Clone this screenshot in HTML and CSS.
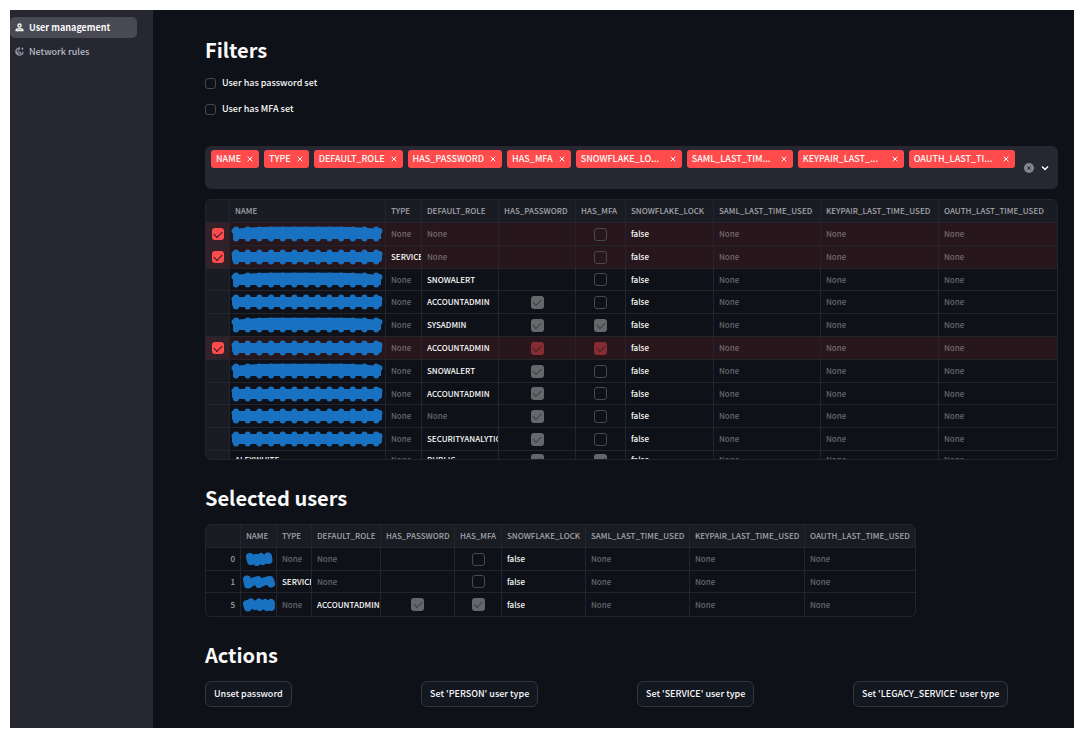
FILE: index.html
```html
<!DOCTYPE html>
<html lang="en">
<head>
<meta charset="utf-8">
<title>User management</title>
<link rel="stylesheet" href="styles.css">
</head>
<body>
<svg class="defs" aria-hidden="true">
  <symbol id="mask-full" viewBox="0 0 151 16" preserveAspectRatio="none">
    <rect x="1" y="3" width="149" height="10" rx="3"/>
    <path class="dots" d="M5 3.5H147M5 12.5H147M3.5 5V11M147.5 5V11"/>
  </symbol>
  <symbol id="mask-flat" viewBox="0 0 151 16" preserveAspectRatio="none">
    <path d="M2 3Q20 1 40 .8H110Q130 1 149 3V13H2z"/>
    <path class="dots" d="M5 3.5H147M5 12.5H147M3.5 5V11M147.5 5V11"/>
  </symbol>
  <symbol id="x" viewBox="0 0 8 8"><path class="line" d="M1.7 1.7L6.3 6.3M6.3 1.7L1.7 6.3"/></symbol>
</svg>
<div class="app">
  <nav class="sidebar">
    <a class="nav-item active" href="#users">
      <svg class="nav-icon" viewBox="0 0 8 8"><circle class="line" cx="4" cy="2.3" r="1.4"/><path class="line" d="M1 6.8V6.2C1.2 4.8 6.8 4.8 7 6.2V6.8z"/></svg>
      <span>User management</span>
    </a>
    <a class="nav-item" href="#network">
      <svg class="nav-icon dim" viewBox="0 0 8 8"><path class="line" d="M4.4.9A3.2 3.2 0 1 0 7.2 4.3"/><path d="M.9 3L3.2 5V7.3C1.5 6.8.6 5 .9 3zM4.3 1V2.5L3 3.2V4H5V5.2L6.2 6.2 5.2 7 3.6 5 2.4 3.5 2.8 2zM6.5 0L7 1.2 8 1.6 7 2 6.5 3.2 6 2 5 1.6 6 1.2z"/></svg>
      <span>Network rules</span>
    </a>
  </nav>
  <main class="main">
    <h2>Filters</h2>
    <div class="filters">
      <label class="filter"><input type="checkbox" class="box filter-box"><span>User has password set</span></label>
      <label class="filter"><input type="checkbox" class="box filter-box"><span>User has MFA set</span></label>
    </div>

    <div class="multiselect">
      <div class="tags">
        <span class="tag">NAME<button aria-label="Remove NAME"><svg><use href="#x"/></svg></button></span>
        <span class="tag">TYPE<button aria-label="Remove TYPE"><svg><use href="#x"/></svg></button></span>
        <span class="tag">DEFAULT_ROLE<button aria-label="Remove DEFAULT_ROLE"><svg><use href="#x"/></svg></button></span>
        <span class="tag">HAS_PASSWORD<button aria-label="Remove HAS_PASSWORD"><svg><use href="#x"/></svg></button></span>
        <span class="tag">HAS_MFA<button aria-label="Remove HAS_MFA"><svg><use href="#x"/></svg></button></span>
        <span class="tag long">SNOWFLAKE_LO...<button aria-label="Remove SNOWFLAKE_LOCK"><svg><use href="#x"/></svg></button></span>
        <span class="tag long">SAML_LAST_TIM...<button aria-label="Remove SAML_LAST_TIME_USED"><svg><use href="#x"/></svg></button></span>
        <span class="tag long">KEYPAIR_LAST_...<button aria-label="Remove KEYPAIR_LAST_TIME_USED"><svg><use href="#x"/></svg></button></span>
        <span class="tag long">OAUTH_LAST_TI...<button aria-label="Remove OAUTH_LAST_TIME_USED"><svg><use href="#x"/></svg></button></span>
      </div>
      <button class="tool" aria-label="Clear all"><svg viewBox="0 0 10 10"><circle class="clear-disc" cx="5" cy="5" r="5"/><path class="clear-x" d="M3.4 3.4L6.6 6.6M6.6 3.4L3.4 6.6"/></svg></button>
      <button class="tool" aria-label="Open"><svg viewBox="0 0 10 10"><path class="chevron" d="M2 3.5L5 6.5L8 3.5"/></svg></button>
    </div>

    <div class="grid-frame users">
      <table>
        <colgroup><col class="w24"><col class="w156"><col class="w36"><col class="w77"><col class="w77"><col class="w50"><col class="w88"><col class="w107"><col class="w118"><col></colgroup>
        <thead><tr><th></th><th>NAME</th><th>TYPE</th><th>DEFAULT_ROLE</th><th>HAS_PASSWORD</th><th>HAS_MFA</th><th>SNOWFLAKE_LOCK</th><th>SAML_LAST_TIME_USED</th><th>KEYPAIR_LAST_TIME_USED</th><th>OAUTH_LAST_TIME_USED</th></tr></thead>
        <tbody>
          <tr class="selected"><td class="pick"><input type="checkbox" class="box" aria-label="Select row" checked></td><td class="masked"><svg><use href="#mask-flat"/></svg></td><td class="none">None</td><td class="none">None</td><td></td><td class="bool"><input type="checkbox" class="box" aria-label="Has MFA" disabled></td><td>false</td><td class="none">None</td><td class="none">None</td><td class="none">None</td></tr>
          <tr class="selected"><td class="pick"><input type="checkbox" class="box" aria-label="Select row" checked></td><td class="masked"><svg><use href="#mask-full"/></svg></td><td>SERVICE</td><td class="none">None</td><td></td><td class="bool"><input type="checkbox" class="box" aria-label="Has MFA" disabled></td><td>false</td><td class="none">None</td><td class="none">None</td><td class="none">None</td></tr>
          <tr><td class="pick"></td><td class="masked"><svg><use href="#mask-flat"/></svg></td><td class="none">None</td><td>SNOWALERT</td><td></td><td class="bool"><input type="checkbox" class="box" aria-label="Has MFA" disabled></td><td>false</td><td class="none">None</td><td class="none">None</td><td class="none">None</td></tr>
          <tr><td class="pick"></td><td class="masked"><svg><use href="#mask-full"/></svg></td><td class="none">None</td><td>ACCOUNTADMIN</td><td class="bool"><input type="checkbox" class="box" aria-label="Has password" checked disabled></td><td class="bool"><input type="checkbox" class="box" aria-label="Has MFA" disabled></td><td>false</td><td class="none">None</td><td class="none">None</td><td class="none">None</td></tr>
          <tr><td class="pick"></td><td class="masked"><svg><use href="#mask-flat"/></svg></td><td class="none">None</td><td>SYSADMIN</td><td class="bool"><input type="checkbox" class="box" aria-label="Has password" checked disabled></td><td class="bool"><input type="checkbox" class="box" aria-label="Has MFA" checked disabled></td><td>false</td><td class="none">None</td><td class="none">None</td><td class="none">None</td></tr>
          <tr class="selected"><td class="pick"><input type="checkbox" class="box" aria-label="Select row" checked></td><td class="masked"><svg><use href="#mask-full"/></svg></td><td class="none">None</td><td>ACCOUNTADMIN</td><td class="bool"><input type="checkbox" class="box" aria-label="Has password" checked disabled></td><td class="bool"><input type="checkbox" class="box" aria-label="Has MFA" checked disabled></td><td>false</td><td class="none">None</td><td class="none">None</td><td class="none">None</td></tr>
          <tr><td class="pick"></td><td class="masked"><svg><use href="#mask-flat"/></svg></td><td class="none">None</td><td>SNOWALERT</td><td class="bool"><input type="checkbox" class="box" aria-label="Has password" checked disabled></td><td class="bool"><input type="checkbox" class="box" aria-label="Has MFA" disabled></td><td>false</td><td class="none">None</td><td class="none">None</td><td class="none">None</td></tr>
          <tr><td class="pick"></td><td class="masked"><svg><use href="#mask-full"/></svg></td><td class="none">None</td><td>ACCOUNTADMIN</td><td class="bool"><input type="checkbox" class="box" aria-label="Has password" checked disabled></td><td class="bool"><input type="checkbox" class="box" aria-label="Has MFA" disabled></td><td>false</td><td class="none">None</td><td class="none">None</td><td class="none">None</td></tr>
          <tr><td class="pick"></td><td class="masked"><svg><use href="#mask-full"/></svg></td><td class="none">None</td><td class="none">None</td><td class="bool"><input type="checkbox" class="box" aria-label="Has password" checked disabled></td><td class="bool"><input type="checkbox" class="box" aria-label="Has MFA" disabled></td><td>false</td><td class="none">None</td><td class="none">None</td><td class="none">None</td></tr>
          <tr><td class="pick"></td><td class="masked"><svg><use href="#mask-full"/></svg></td><td class="none">None</td><td>SECURITYANALYTICS</td><td class="bool"><input type="checkbox" class="box" aria-label="Has password" checked disabled></td><td class="bool"><input type="checkbox" class="box" aria-label="Has MFA" disabled></td><td>false</td><td class="none">None</td><td class="none">None</td><td class="none">None</td></tr>
          <tr><td class="pick"></td><td>ALEXWHITE</td><td class="none">None</td><td>PUBLIC</td><td class="bool"><input type="checkbox" class="box" aria-label="Has password" checked disabled></td><td class="bool"><input type="checkbox" class="box" aria-label="Has MFA" checked disabled></td><td>false</td><td class="none">None</td><td class="none">None</td><td class="none">None</td></tr>
        </tbody>
      </table>
    </div>

    <h2>Selected users</h2>
    <div class="grid-frame chosen">
      <table>
        <colgroup><col class="w35"><col class="w36"><col class="w35"><col class="w69"><col class="w74"><col class="w47"><col class="w84"><col class="w104"><col class="w115"><col class="w110"></colgroup>
        <thead><tr><th></th><th>NAME</th><th>TYPE</th><th>DEFAULT_ROLE</th><th>HAS_PASSWORD</th><th>HAS_MFA</th><th>SNOWFLAKE_LOCK</th><th>SAML_LAST_TIME_USED</th><th>KEYPAIR_LAST_TIME_USED</th><th>OAUTH_LAST_TIME_USED</th></tr></thead>
        <tbody>
          <tr><td class="index">0</td><td class="masked"><svg viewBox="0 0 35 16"><path class="blob" d="M9 6L10 10 15 7 16 11 20 6 22 10 27 5.5 27.5 9"/></svg></td><td class="none">None</td><td class="none">None</td><td></td><td class="bool"><input type="checkbox" class="box" aria-label="Has MFA" disabled></td><td>false</td><td class="none">None</td><td class="none">None</td><td class="none">None</td></tr>
          <tr><td class="index">1</td><td class="masked"><svg viewBox="0 0 35 16"><path class="blob" d="M6 5.5L7 10.5 12 7.5 17 6 18 10 23 7.5 29 6 30 9.5"/></svg></td><td>SERVICE</td><td class="none">None</td><td></td><td class="bool"><input type="checkbox" class="box" aria-label="Has MFA" disabled></td><td>false</td><td class="none">None</td><td class="none">None</td><td class="none">None</td></tr>
          <tr><td class="index">5</td><td class="masked"><svg viewBox="0 0 35 16"><path class="blob" d="M6 7L7 10.5 10 5.5 14 9 18 5.5 19 10 24 6 26 10 30 6V10"/></svg></td><td class="none">None</td><td>ACCOUNTADMIN</td><td class="bool"><input type="checkbox" class="box" aria-label="Has password" checked disabled></td><td class="bool"><input type="checkbox" class="box" aria-label="Has MFA" checked disabled></td><td>false</td><td class="none">None</td><td class="none">None</td><td class="none">None</td></tr>
        </tbody>
      </table>
    </div>

    <h2>Actions</h2>
    <div class="actions">
      <button class="action">Unset password</button>
      <button class="action">Set 'PERSON' user type</button>
      <button class="action">Set 'SERVICE' user type</button>
      <button class="action">Set 'LEGACY_SERVICE' user type</button>
    </div>
  </main>
</div>
</body>
</html>
```

FILE: styles.css
```css
* { box-sizing: border-box; }

body {
  margin: 0;
  padding: 10px 9px 10px 10px;
  background: #fff;
  color: #fafafa;
  font: 500 9px/14px "Noto Sans CJK JP", "Noto Sans", sans-serif;
}

button {
  margin: 0;
  padding: 0;
  border: 0;
  background: none;
  color: inherit;
  font: inherit;
}

svg { display: block; fill: currentColor; }
.defs { position: absolute; width: 0; height: 0; }
.line { fill: none; stroke: currentColor; stroke-width: 1.2; }

.app {
  display: flex;
  min-height: calc(100vh - 20px);
  background: #0e1117;
}

.sidebar {
  flex: 0 0 143px;
  display: flex;
  flex-direction: column;
  gap: 3px;
  padding: 7px 16px 0 0;
  background: #262730;
}

.nav-item {
  display: flex;
  align-items: center;
  gap: 5px;
  height: 21px;
  padding-left: 5px;
  border-radius: 5px;
  color: #b8bbc6;
  text-decoration: none;
}
.nav-item.active { background: #484953; color: #fafafa; font-weight: 700; }
.nav-icon { width: 9px; height: 9px; }
.dim { color: #8d90a0; }

.main {
  flex: 1;
  min-width: 0;
  padding: 27px 16px 21px 52px;
}

h2 {
  margin: 25px 0 13px;
  font-size: 20px;
  line-height: 26px;
  font-weight: 700;
}
h2:first-child { margin: 0 0 7px; }

.filter {
  display: flex;
  align-items: center;
  gap: 6px;
  height: 26px;
}

.box {
  appearance: none;
  display: grid;
  place-items: center;
  width: 13px;
  height: 13px;
  margin: 0 auto;
  border: 1px solid #48494d;
  border-radius: 3px;
}
.filter-box { width: 11px; height: 11px; margin: 0; }
.box:checked { border: 0; background: #66676b; }
.box:checked::before {
  content: "";
  width: 7px;
  height: 4px;
  margin-bottom: 2px;
  border: solid #3b3d42;
  border-width: 0 0 1px 1px;
  transform: rotate(-45deg);
}
.selected .box:checked { background: #852d32; }
.selected .box:checked::before { border-color: #4b2026; }
.selected .pick .box:checked { width: 12px; height: 12px; background: #ff4b4b; }
.selected .pick .box:checked::before { border-color: #1a1c24; }

.multiselect {
  display: flex;
  align-items: center;
  gap: 6px;
  min-height: 43px;
  margin: 24px 0 10px;
  padding: 4px 8px 4px 6px;
  border-radius: 6px;
  background: #262730;
}
.tags {
  flex: 1;
  display: flex;
  flex-wrap: wrap;
  align-self: flex-start;
  gap: 5px;
}
.tag {
  display: flex;
  align-items: center;
  justify-content: space-between;
  gap: 5px;
  height: 18px;
  padding: 0 5px;
  border-radius: 3px;
  background: #ff4b4b;
}
.tag.long { width: 106px; }
.tag svg { width: 8px; height: 8px; }
.tag .line, #x .line { stroke-width: 1; }
.tool svg { width: 10px; height: 10px; }
.clear-disc { fill: #808495; }
.clear-x { stroke: #262730; }
.chevron { fill: none; stroke: #fafafa; stroke-width: 1.5; }

.grid-frame {
  overflow: hidden;
  border: 1px solid #23252c;
  border-radius: 6px;
}
.users { height: 261px; }
.chosen { width: 711px; max-width: 100%; }

table {
  width: 100%;
  border-collapse: separate;
  border-spacing: 0;
  table-layout: fixed;
  font-size: 8px;
  line-height: 12px;
}
tr { height: 23px; }
.users tbody tr:nth-child(5n+3),
.chosen tbody tr:nth-child(2) { height: 22px; }
th, td {
  padding: 0 5px;
  overflow: hidden;
  border-right: 1px solid #23252c;
  border-bottom: 1px solid #23252c;
  text-align: left;
  white-space: nowrap;
}
th:last-child, td:last-child { border-right: 0; }
.chosen tr:last-child td { border-bottom: 0; }
.users tbody tr:last-child td { padding-top: 3px; vertical-align: top; }
th,
.chosen tr:first-child th { background: #1a1c24; border-bottom: 1px solid #23252c; color: #a3a5aa; font-weight: 500; }
.none { color: #66686d; }
.pick { padding: 0; background: #1a1c24; }
.bool { padding: 0; }
.index { color: #a3a5aa; text-align: right; }
.selected td { background: #27161b; }
.selected .pick { background: #33212a; }
.selected .none { color: #736a6e; }

.masked { padding: 0 2px 0 1px; color: #1971c2; }
.masked svg { width: 100%; height: 16px; }
.chosen .masked { padding: 0; }
.dots { fill: none; stroke: #1971c2; stroke-width: 6; stroke-linecap: round; stroke-dasharray: 0 11.6; }
.blob { fill: none; stroke: #1971c2; stroke-width: 8; stroke-linecap: round; stroke-linejoin: round; }

.w24 { width: 24px; }
.w35 { width: 35px; }
.w36 { width: 36px; }
.w47 { width: 47px; }
.w50 { width: 50px; }
.w69 { width: 69px; }
.w74 { width: 74px; }
.w77 { width: 77px; }
.w84 { width: 84px; }
.w88 { width: 88px; }
.w104 { width: 104px; }
.w107 { width: 107px; }
.w110 { width: 110px; }
.w115 { width: 115px; }
.w118 { width: 118px; }
.w156 { width: 156px; }

.actions {
  display: grid;
  grid-template-columns: repeat(4, 1fr);
  gap: 11px;
  justify-items: start;
}
.action {
  height: 26px;
  padding: 0 8px;
  border: 1px solid #34363e;
  border-radius: 6px;
  background: #131720;
}
```
